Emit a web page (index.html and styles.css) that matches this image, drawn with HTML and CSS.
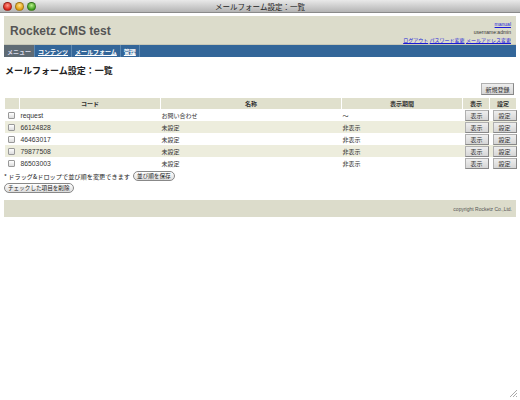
FILE: index.html
```html
<!DOCTYPE html>
<html lang="ja">
<head>
<meta charset="utf-8">
<title>メールフォーム設定：一覧</title>
<link rel="stylesheet" href="styles.css">
</head>
<body>
<div class="window">
  <div class="titlebar">
    <div class="lights">
      <span class="light red"></span>
      <span class="light yellow"></span>
      <span class="light green"></span>
    </div>
    <div class="wtitle">メールフォーム設定：一覧</div>
  </div>
  <div class="page">
    <div class="header">
      <div class="brand">Rocketz CMS test</div>
      <div class="account">
        <a href="#">manual</a>
        <span>username:admin</span>
        <div class="acc-links"><a href="#">ログアウト</a> <a href="#">パスワード変更</a> <a href="#">メールアドレス変更</a></div>
      </div>
    </div>
    <div class="nav">
      <span class="nav-item current">メニュー</span>
      <a class="nav-item" href="#">コンテンツ</a>
      <a class="nav-item" href="#">メールフォーム</a>
      <a class="nav-item" href="#">管理</a>
    </div>
    <h1 class="heading">メールフォーム設定：一覧</h1>
    <div class="toolbar"><button class="btn btn-new">新規登録</button></div>
    <table class="list">
      <colgroup>
        <col class="c-check"><col class="c-code"><col class="c-name"><col class="c-period"><col class="c-btn"><col class="c-btn">
      </colgroup>
      <thead>
        <tr><th></th><th>コード</th><th>名称</th><th>表示期間</th><th>表示</th><th>設定</th></tr>
      </thead>
      <tbody>
        <tr><td><span class="chk"></span></td><td>request</td><td>お問い合わせ</td><td>～</td><td><button class="btn">表示</button></td><td><button class="btn">設定</button></td></tr>
        <tr class="alt"><td><span class="chk"></span></td><td>66124828</td><td>未設定</td><td>非表示</td><td><button class="btn">表示</button></td><td><button class="btn">設定</button></td></tr>
        <tr><td><span class="chk"></span></td><td>46463017</td><td>未設定</td><td>非表示</td><td><button class="btn">表示</button></td><td><button class="btn">設定</button></td></tr>
        <tr class="alt"><td><span class="chk"></span></td><td>79877508</td><td>未設定</td><td>非表示</td><td><button class="btn">表示</button></td><td><button class="btn">設定</button></td></tr>
        <tr><td><span class="chk"></span></td><td>86503003</td><td>未設定</td><td>非表示</td><td><button class="btn">表示</button></td><td><button class="btn">設定</button></td></tr>
      </tbody>
    </table>
    <div class="note">* ドラッグ&amp;ドロップで並び順を変更できます <button class="pill">並び順を保存</button></div>
    <div class="delete"><button class="pill">チェックした項目を削除</button></div>
    <div class="footer">copyright Rocketz Co.,Ltd.</div>
  </div>
  <svg class="grip" width="9" height="9" viewBox="0 0 9 9">
    <path d="M8 1 L1 8 M8 4 L4 8 M8 7 L7 8" stroke="#aaa" stroke-width="1" fill="none"/>
  </svg>
</div>
</body>
</html>
```

FILE: styles.css
```css
html, body {
  margin: 0;
  padding: 0;
  background: #fff;
}
body {
  font-family: "Liberation Sans", "Noto Sans CJK JP", sans-serif;
  color: #333;
  width: 520px;
  height: 400px;
  overflow: hidden;
}
.window {
  position: relative;
  width: 520px;
  height: 400px;
}
.titlebar {
  height: 13px;
  background: linear-gradient(#e9e9e9, #b4b4b4);
  border-bottom: 1px solid #8a8a8a;
  box-sizing: border-box;
  display: flex;
  align-items: center;
  position: relative;
}
.lights {
  display: flex;
  gap: 3px;
  padding-left: 3px;
}
.light {
  width: 9px;
  height: 9px;
  border-radius: 50%;
  box-sizing: border-box;
  border: 1px solid rgba(0,0,0,0.3);
}
.red { background: radial-gradient(circle at 50% 35%, #ff9a8a, #d9231a 70%); }
.yellow { background: radial-gradient(circle at 50% 35%, #ffe08a, #e0a010 70%); }
.green { background: radial-gradient(circle at 50% 35%, #b8f08a, #3f9e1e 70%); }
.wtitle {
  flex: 1;
  text-align: center;
  font-size: 7.5px;
  color: #222;
  margin-right: 36px;
  font-family: "Noto Sans CJK JP", sans-serif;
}
.page {
  padding: 3px 4px 0;
}
.header {
  height: 28px;
  background: #dcdccb;
  display: flex;
  justify-content: space-between;
  align-items: stretch;
  box-sizing: border-box;
  padding: 0 5px 0 6px;
}
.brand {
  font-size: 12px;
  font-weight: bold;
  color: #555;
  align-self: center;
  padding-top: 2px;
}
.account {
  display: flex;
  flex-direction: column;
  align-items: flex-end;
  justify-content: flex-end;
  font-size: 5px;
  line-height: 8px;
  color: #333;
}
.account a {
  color: #1a1ad8;
}
.acc-links {
  white-space: nowrap;
}
.nav {
  height: 13px;
  background: #336699;
  display: flex;
  border-top: 1px solid #c8c8b8;
  box-sizing: border-box;
}
.nav-item {
  font-size: 6px;
  font-weight: bold;
  color: #fff;
  display: flex;
  align-items: center;
  padding: 0 3px;
  border-right: 1px solid #5c88b2;
  text-decoration: underline;
}
.nav-item.current {
  background: #5f6b74;
  color: #dde;
  text-decoration: none;
  width: 24px;
  padding: 0 3px;
}
.heading {
  margin: 8px 0 0 1px;
  font-size: 9px;
  line-height: 12px;
  font-weight: bold;
  color: #222;
  font-family: "Noto Sans CJK JP", sans-serif;
}
.toolbar {
  display: flex;
  justify-content: flex-end;
  margin-top: 6px;
  padding-right: 2px;
}
.btn {
  font-family: "Noto Sans CJK JP", sans-serif;
  font-size: 6px;
  line-height: 9px;
  color: #333;
  background: linear-gradient(#eeeeee, #d6d6d6);
  border: 1px solid #b0b0b0;
  border-right-color: #888;
  border-bottom-color: #888;
  padding: 0;
  margin: 0;
  width: 24px;
  height: 11px;
  display: block;
}
.btn-new {
  width: 33px;
  height: 12px;
}
.list {
  margin-top: 3px;
  width: 512px;
  border-collapse: collapse;
  table-layout: fixed;
  font-size: 6.8px;
}
.c-check { width: 15px; }
.c-code { width: 141px; }
.c-name { width: 181px; }
.c-period { width: 121px; }
.c-btn { width: 27px; }
.list th {
  background: #e0e0cd;
  border-left: 1px solid #fff;
  border-right: 1px solid #fff;
  height: 11px;
  padding: 0;
  font-weight: bold;
  color: #333;
  font-size: 6px;
  font-family: "Noto Sans CJK JP", sans-serif;
  text-align: center;
}
.list td {
  height: 12px;
  padding: 0 0 0 1px;
  white-space: nowrap;
  color: #333;
}
.list tbody td:nth-child(3), .list tbody td:nth-child(4) {
  font-family: "Noto Sans CJK JP", sans-serif;
  font-size: 6px;
}
.list tr.alt td {
  background: #ededdd;
}
.list td:first-child {
  padding-left: 2px;
}
.list td:nth-child(5) .btn {
  margin-left: 1px;
}
.list td:nth-child(6) .btn {
  margin-left: 2px;
}
.chk {
  display: block;
  width: 5px;
  height: 5px;
  border: 1px solid #999;
  border-radius: 1px;
  background: linear-gradient(#fff, #ddd);
  margin-left: 1px;
}
.note {
  margin-top: 2px;
  font-size: 6.2px;
  font-family: "Noto Sans CJK JP", sans-serif;
  display: flex;
  align-items: center;
  gap: 3px;
  color: #222;
  height: 10px;
}
.pill {
  font-family: "Noto Sans CJK JP", sans-serif;
  font-size: 5.6px;
  color: #222;
  height: 10px;
  line-height: 8px;
  padding: 0 3px;
  border: 1px solid #888;
  border-radius: 5px;
  background: linear-gradient(#ffffff, #dcdcdc);
  margin: 0;
}
.delete {
  margin-top: 2px;
  display: flex;
}
.footer {
  margin-top: 7px;
  height: 17px;
  background: #dcdccb;
  font-size: 5px;
  color: #555;
  display: flex;
  align-items: center;
  justify-content: flex-end;
  padding-right: 4px;
}
.grip {
  position: absolute;
  right: 2px;
  bottom: 2px;
}
```
